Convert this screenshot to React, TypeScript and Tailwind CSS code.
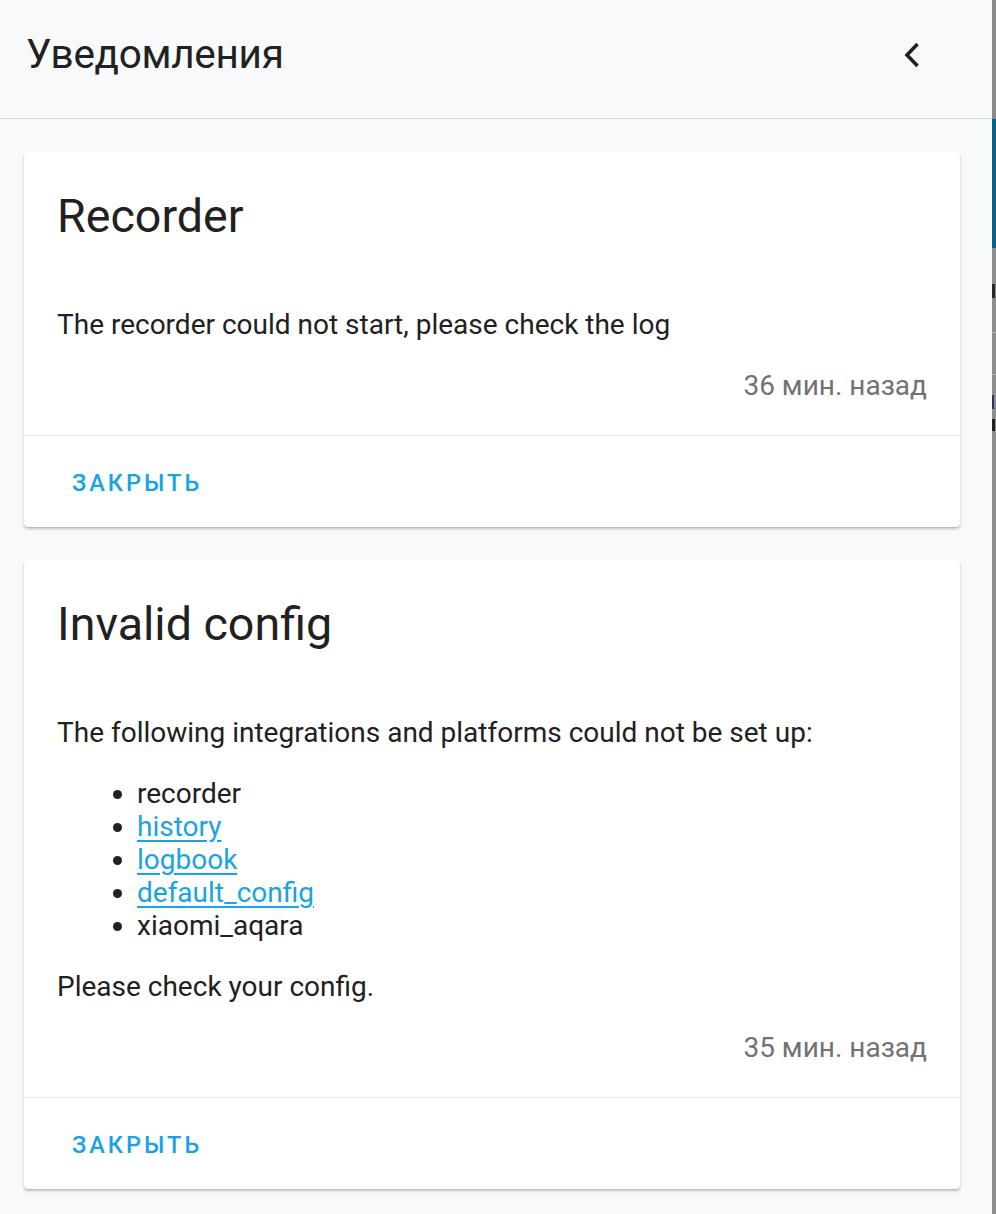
import React from "react";

const font = { fontFamily: "Roboto, 'Noto Sans', Arial, sans-serif" };

function Card({
  title,
  time,
  children,
}: {
  title: string;
  time: string;
  children: React.ReactNode;
}) {
  return (
    <div className="ml-[24px] mr-[32px] bg-white rounded-[4px] shadow-[0_2px_3px_rgba(0,0,0,0.22),0_1px_1px_rgba(0,0,0,0.08)]">
      <div className="px-[33px] pt-[34px] text-[46.6px] leading-[60px] text-[#212121]">{title}</div>
      <div className="px-[33px] pt-[62px] text-[28px] leading-[33px] text-[#212121] flex flex-col gap-[28px]">
        {children}
        <div className="text-right text-[#727272]">{time}</div>
      </div>
      <div className="mt-[33px] border-t border-[#e3e3e3] h-[92px] flex items-center px-[48px]">
        <span className="text-[23.5px] font-medium tracking-[3px] text-[#18a3e4] translate-y-[2px]">ЗАКРЫТЬ</span>
      </div>
    </div>
  );
}

export default function App() {
  return (
    <div className="flex w-[996px] h-[1214px] overflow-hidden" style={font}>
      <div className="w-[992px] bg-[#f8f9fb] flex flex-col">
        <div className="h-[119px] shrink-0 border-b border-[#d9dadc] flex items-start justify-between pl-[26px] pr-[72px] pt-[29px]">
          <span className="text-[40.5px] leading-[50px] text-[#212121] tracking-[-0.3px]">Уведомления</span>
          <svg width="16" height="26" viewBox="0 0 16 26" className="mt-[13px]">
            <polyline points="13.5,2 3,13 13.5,24" fill="none" stroke="#212121" strokeWidth="3.6" />
          </svg>
        </div>
        <div className="pt-[33px] flex flex-col gap-[33px]">
          <Card title="Recorder" time="36 мин. назад">
            <p>The recorder could not start, please check the log</p>
          </Card>
          <Card title="Invalid config" time="35 мин. назад">
            <p>The following integrations and platforms could not be set up:</p>
            <ul className="list-disc pl-[80px] marker:text-[#212121]">
              <li>recorder</li>
              <li>
                <a className="text-[#18a3e4] underline underline-offset-[4px]">history</a>
              </li>
              <li>
                <a className="text-[#18a3e4] underline underline-offset-[4px]">logbook</a>
              </li>
              <li>
                <a className="text-[#18a3e4] underline underline-offset-[4px]">default_config</a>
              </li>
              <li>xiaomi_aqara</li>
            </ul>
            <p>Please check your config.</p>
          </Card>
        </div>
      </div>
      <div className="w-[4px] bg-[#8e8e8e] flex flex-col">
        <div className="h-[119px] bg-[#8b8b8b]" />
        <div className="h-[129px] bg-[#0b6388]" />
        <div className="h-[36px]" />
        <div className="h-[14px] w-[3px] bg-[#2a2a2a]" />
        <div className="h-[34px]" />
        <div className="h-[1px] bg-[#b0b0b0]" />
        <div className="h-[41px]" />
        <div className="h-[1px] bg-[#b0b0b0]" />
        <div className="h-[20px]" />
        <div className="h-[14px] w-[2px] bg-[#2a3560]" />
        <div className="h-[10px]" />
        <div className="h-[12px] w-[3px] bg-[#222]" />
      </div>
    </div>
  );
}
